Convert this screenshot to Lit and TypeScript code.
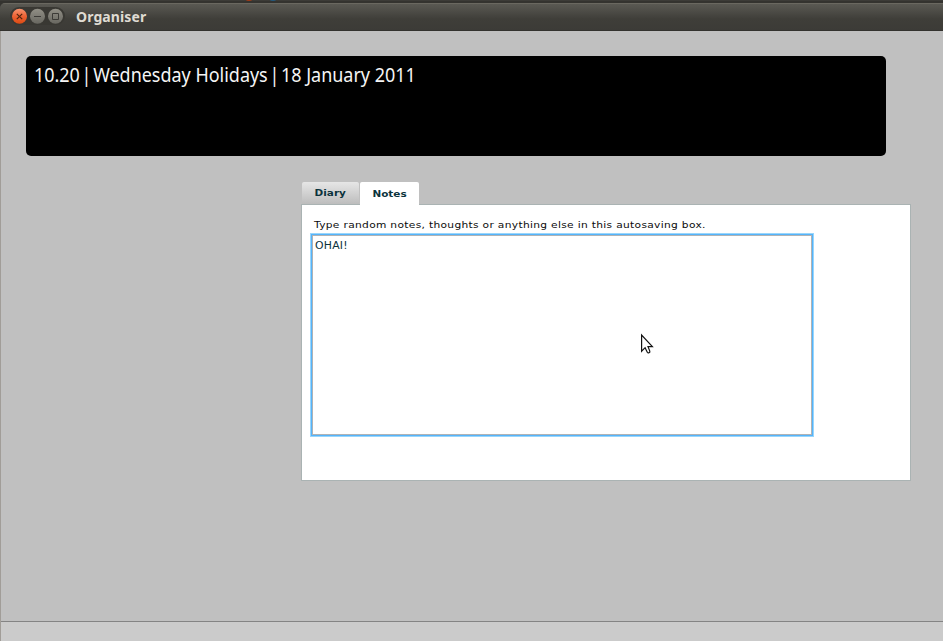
import { LitElement, html, css } from "lit";
import { customElement } from "lit/decorators.js";

@customElement("app-root")
export class AppRoot extends LitElement {
  static styles = css`
    :host { display: block; position: relative; width: 943px; height: 641px; overflow: hidden; background: #c0c0c0; }
    * { box-sizing: border-box; }
    .window { display: flex; flex-direction: column; height: 641px; }
    .desk { position: relative; height: 3px; background: linear-gradient(#3c3b37 0 1px, #34332f 1px 3px); overflow: hidden; }
    .spot { position: absolute; top: -7px; width: 10px; height: 8px; border-radius: 50%; }
    .red { left: 244px; background: #a33a16; }
    .blue { left: 268px; background: #235a80; }
    .titlebar { display: flex; align-items: center; height: 28px; padding: 0 0 1px 10px; border-radius: 5px 0 0 0; background: linear-gradient(#6a6860 0 1px, #5a5953 1px, #3f3e39 16px, #3c3b37); border-bottom: 1px solid #33322e; }
    .titlewrap { background: #34332f; }
    .controls { display: block; width: 56px; height: 20px; }
    .title { margin-left: 10px; padding-top: 2px; font: bold 14px/20px "Noto Sans", sans-serif; color: #dfdbd2; white-space: nowrap; letter-spacing: 0.1px; }
    .body { flex: 1; display: flex; flex-direction: column; border-left: 1px solid #a19d98; }
    .content { flex: 1; padding: 25px 0 0 25px; }
    .banner { width: 860px; height: 100px; border-radius: 5px; background: #000; padding: 5px 0 0 8px; color: #f5f5f5; font: 19px/28px "Noto Sans", "Open Sans", sans-serif; white-space: nowrap; }
    .heading { display: flex; width: 420px; transform-origin: 0 50%; transform: scaleX(0.945); }
    .bar { width: 14px; text-align: center; display: flex; justify-content: center; }
    .notebook { width: 610px; margin: 26px 0 0 275px; }
    .tabs { display: flex; align-items: flex-start; height: 22px; padding-left: 1px; color: #0b333c; }
    .tab { height: 22px; border-radius: 2px 2px 0 0; text-align: center; white-space: nowrap; font: bold 9.5px/22px "DejaVu Sans", sans-serif; }
    .tab span { display: inline-block; transform: scaleX(1.1); }
    .tabs .diary { width: 57px; background: linear-gradient(#e6e6e6, #bdbdbd); }
    .tabs .notes { width: 59px; height: 24px; margin-left: 1px; background: #fff; line-height: 24px; position: relative; }
    .panel { height: 277px; border: 1px solid #aab3b3; background: #fff; padding: 13px 0 0 8px; }
    .hint { height: 15px; padding-left: 4px; font: 9.5px/14px "DejaVu Sans", sans-serif; color: #0b0b0b; white-space: nowrap; letter-spacing: 0.29px; }
    .wide { display: inline-block; transform-origin: 0 50%; transform: scaleX(1.12); }
    .memo { width: 504px; height: 204px; border: 1px solid #9ad6fb; }
    .ring { height: 100%; border: 1px solid #55b4fb; }
    .sheet { height: 100%; border: 1px solid #b0b3b5; padding: 2px 0 0 2px; font: 9.7px/16px "DejaVu Sans", sans-serif; color: #0b333c; letter-spacing: 0.2px; }
    .status { height: 20px; border-top: 1px solid #848484; background: #cbcbcb; }
    .cursor { position: absolute; left: 640px; top: 333px; }
  `;

  render() {
    return html`
      <div class="window">
        <div class="desk"><i class="spot red"></i><i class="spot blue"></i></div>
        <div class="titlewrap"><div class="titlebar">
          <svg class="controls" viewBox="0 0 56 20">
            <defs>
              <linearGradient id="o" x2="0" y2="1"><stop stop-color="#f79470"/><stop offset=".5" stop-color="#ed6234"/><stop offset="1" stop-color="#dc4b13"/></linearGradient>
              <linearGradient id="g" x2="0" y2="1"><stop stop-color="#918f86"/><stop offset="1" stop-color="#686760"/></linearGradient>
            </defs>
            <rect x="0" y="1" width="55" height="18" rx="9" fill="#393833"/>
            <circle cx="9.5" cy="10.3" r="7.5" fill="url(#o)"/>
            <circle cx="27.5" cy="10.3" r="7.5" fill="url(#g)"/>
            <circle cx="45.5" cy="10.3" r="7.5" fill="url(#g)"/>
            <path d="M6.8 7.8l5.4 5.4M12.2 7.8l-5.4 5.4" stroke="#51240f" stroke-width="1.2"/>
            <path d="M24 10.5h7M42.5 7.5h6v6h-6z" stroke="#3c3b37" fill="none"/>
          </svg>
          <span class="title">Organiser</span>
        </div></div>
        <div class="body">
          <div class="content">
            <div class="banner"><div class="heading"><span>10.20</span><span class="bar">|</span><span>Wednesday Holidays</span><span class="bar">|</span><span>18 January 2011</span></div></div>
            <div class="notebook">
              <div class="tabs"><div class="tab diary"><span>Diary</span></div><div class="tab notes"><span>Notes</span></div></div>
              <div class="panel">
                <div class="hint"><span class="wide">Type random notes, thoughts or anything else in this autosaving box.</span></div>
                <div class="memo"><div class="ring"><div class="sheet"><span class="wide">OHAI!</span></div></div></div>
              </div>
            </div>
          </div>
          <div class="status"></div>
        </div>
      </div>
      <svg class="cursor" width="16" height="24" viewBox="0 0 16 24">
        <path d="M1.6 2v16.2l3.5-3.5 2.2 4.5c.8 1.5 3 .5 2.5-1.1l-1.8-4.4h4.4z" fill="#fff" stroke="#111" stroke-width="1.2"/>
      </svg>
    `;
  }
}
